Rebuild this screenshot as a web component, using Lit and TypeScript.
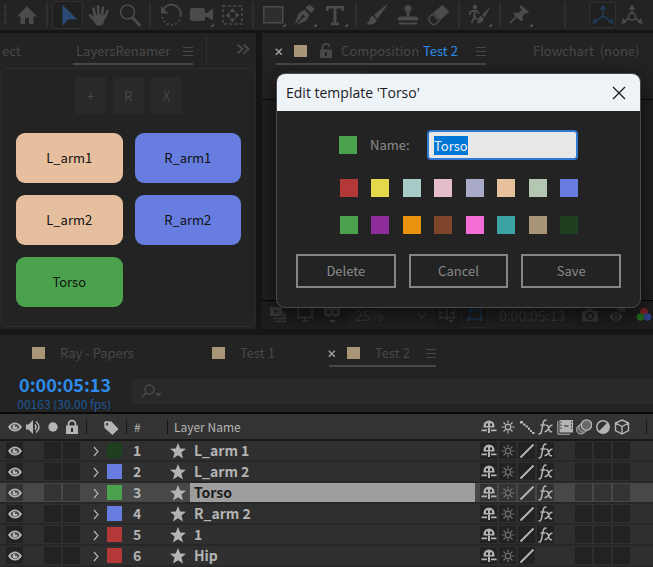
import { LitElement, html, css, svg, nothing, TemplateResult } from "lit";
import { customElement, property, query, state } from "lit/decorators.js";
import { classMap } from "lit/directives/class-map.js";
import { styleMap } from "lit/directives/style-map.js";

type Icon = TemplateResult<2>;

const corner = svg`<path d="M24 20v4h-4z" fill="currentColor"/>`;

/* Toolbar glyphs, drawn on a 24 x 24 grid. */
const tools: Record<string, Icon> = {
  home: svg`<path fill="currentColor" d="M12 3 2 13.500h3.500V21h4.500v-6h4v6h4.500v-7.500H22z"/>`,
  select: svg`<path fill="#2b4a72" d="M6.500 2v21l5.500-6.500h9.500z"/>`,
  hand: svg`<g fill="none" stroke="currentColor" stroke-linecap="round" stroke-width="2.600"><path d="M8 13 6.500 5.500M11.500 12 11 3.500M15 12l1-7.500M18 14l2.500-6M7.500 17 3 12.500"/></g><path fill="currentColor" d="M6.500 11.500h13L17 19l-2 3.500H9.500L5 16z"/>`,
  zoom: svg`<circle cx="9.500" cy="9" r="7" fill="none" stroke="currentColor" stroke-width="1.500"/><path d="m15 15 6.500 7" stroke="currentColor" stroke-width="3" stroke-linecap="round"/>`,
  rotate: svg`<path d="M3.500 8a9 9 0 0 1 17.800 6" fill="none" stroke="currentColor" stroke-width="1.800"/><path fill="currentColor" d="M2 3v7.500h7.500z"/><path d="M20.500 17A9 9 0 0 1 3.500 14" fill="none" stroke="currentColor" stroke-width="1.800" stroke-dasharray="1.800 2.400"/>`,
  camera: svg`<rect x="0" y="5" width="15" height="13" rx="2" fill="currentColor"/><path fill="currentColor" d="M14 10h3l5-4h1v11h-1l-5-3h-3z"/>${corner}`,
  pan: svg`<rect x="2" y="3" width="19" height="18" fill="none" stroke="currentColor" stroke-width="1.600" stroke-dasharray="3 2.200"/><path fill="currentColor" d="m11.500 5 3 4h-6zM11.500 19.500l3-4h-6zM4.500 12.200l4-3v6zM18.500 12.200l-4-3v6z"/>`,
  rect: svg`<rect x="1.800" y="3.800" width="19" height="16" fill="#2e2e2e" stroke="currentColor" stroke-width="1.500"/>${corner}`,
  pen: svg`<path fill="currentColor" d="m14 3 3-1.500 4.500 4.500L20 8.500l-2 1.500L12.500 5zM11 6.500l5.500 5-3 6L3 22l-1-.5L5 11z"/><path d="m3 21.500 6-7" stroke="#232323" stroke-width="1.200"/><circle cx="10" cy="13.500" r="1.500" fill="#232323"/>${corner}`,
  type: svg`<path fill="currentColor" d="M2 3h18v5h-2.500V5.500h-5v14H15V22H7v-2.500h2.500v-14h-5V8H2z"/>${corner}`,
  brush: svg`<path fill="currentColor" d="M21.500 1.500 9 12l3.500 4L22 2.500zM8 13c-4 .5-2.500 5-6.500 8 5 1.500 10 0 10-4.500z"/>`,
  stamp: svg`<path fill="currentColor" d="M12 2a3.600 3.600 0 0 0-2 6.500c1 1 .8 3 .5 5H4q-2 0-2 2.500v1.500h20V16q0-2.500-2-2.500h-6.500c-.3-2-.5-4 .5-5A3.600 3.600 0 0 0 12 2zM3 19.500h18v2H3z"/>`,
  eraser: svg`<path fill="currentColor" d="m15 2 7.500 6.500-9 8.500-7.500-7z"/><path d="m5.500 11 7 6.500-4.500 4H5.500L2 18v-3.500z" fill="none" stroke="currentColor" stroke-width="1.300"/>`,
  roto: svg`<circle cx="7" cy="4" r="2.200" fill="currentColor"/><path d="M2 12V9l4-1.500 3 .5 2 3M6.500 8v6L3.500 20M7 14l2.500 3" fill="none" stroke="currentColor" stroke-width="1.800"/><path fill="currentColor" d="m23 3-9 9 2.500 2.500zM13 13c-3 .5-2 4-4.500 7 4 .8 7-1 7-4.500z"/>${corner}`,
  pin: svg`<path fill="currentColor" d="m12 2 8 7-1.500 1.500-2-.2-3 3.200.5 3.500-1.800 1.500-8-7.500L6 9.500l3.800.2L12.500 7l-1.700-3z"/><path d="m7.500 13.500-6.500 6.500" stroke="currentColor" stroke-width="1.800"/>${corner}`,
};

const axis = (hub: boolean): Icon => svg`
  <g fill="none" stroke="currentColor" stroke-width="1.600">
    <path d=${hub ? "M12 10V5M8.500 15.500 4.500 18M15.500 15.500l4 2.500" : "M12 13V5M12 13l-8 5.500M12 13l8 5.500"} />
    ${hub ? svg`<circle cx="12" cy="13.500" r="3.600"/>` : nothing}
  </g>
  <path fill="currentColor" d="m12 1.500 3.500 5h-7zM1.500 21l1.200-6 4 4.800zM22.500 21l-1.200-6-4 4.800z"/>`;

/* Small glyphs, drawn on a 16 x 16 grid. */
const small: Record<string, Icon> = {
  eye: svg`<path fill="currentColor" fill-rule="evenodd" d="M1 8q3-4.500 7-4.500T15 8q-3 4.500-7 4.500T1 8zm3 0q0 2 4 3 4-1 4-3t-4-3Q4 6 4 8z"/><circle cx="8" cy="8" r="2.600" fill="currentColor"/><circle cx="9" cy="7" r=".9" fill="#222"/>`,
  speaker: svg`<path fill="currentColor" d="M0 5.500h2.500L7 1v14l-4.500-4.500H0z"/><path d="M9 5.500q2 2.500 0 5M10 2.500q6 5.500 0 11" fill="none" stroke="currentColor" stroke-width="1.500"/>`,
  solo: svg`<circle cx="8" cy="8" r="4.700" fill="currentColor"/>`,
  lock: svg`<path d="M4.500 8V5.200a3.500 3.500 0 0 1 7 0V8" fill="none" stroke="currentColor" stroke-width="1.800"/><rect x="2" y="6.500" width="12" height="8.500" fill="currentColor"/><path d="M8 9v4" stroke="#2b2b2b" stroke-width="2"/>`,
  unlock: svg`<path d="M4.500 8V4.500a3.500 3.500 0 0 1 7-.5" fill="none" stroke="currentColor" stroke-width="1.800"/><rect x="2" y="6.500" width="12" height="8.500" fill="currentColor"/><path d="M8 9v4" stroke="#232323" stroke-width="2"/>`,
  tag: svg`<path fill="currentColor" fill-rule="evenodd" d="M1 2.500 2.500 1l6 .5 7 7.500-6 6-8-7zM4 3a1.200 1.200 0 1 0 0 2.400A1.200 1.200 0 0 0 4 3z"/>`,
  star: svg`<path fill="currentColor" d="m8 0 2.200 5.600 5.800.2-4.600 3.700L13 15.500l-5-3.300-5 3.300 1.600-6L0 5.800l5.800-.2z"/>`,
  shy: svg`<path fill="currentColor" fill-rule="evenodd" d="M8 1.500A5.500 5.500 0 0 0 2.500 7v1.500h11V7A5.500 5.500 0 0 0 8 1.500zM5 4.500h2V7H5zM9 4.500h2V7H9z"/><path fill="currentColor" d="M7 8.500h2v5.500H7zM.5 10.500H6v1.700H.5zM10 10.500h5.500v1.700H10z"/>`,
  sun: svg`<circle cx="8" cy="8" r="2.700" fill="none" stroke="currentColor" stroke-width="1.300"/><path d="M8 1.500v3M8 11.500v3M1.500 8h3M11.500 8h3M3.500 3.500l2 2M10.500 10.500l2 2M12.500 3.500l-2 2M5.500 10.500l-2 2" stroke="currentColor" stroke-width="1.200"/>`,
  steps: svg`<path fill="currentColor" d="M1 2h3v2.500H1zM4 4.500h2.500v2H4zM6.500 6.500H9v2H6.500zM9 8.500h2V11H9zM11 11h2v2h-2zM13 13h2.500v2H13z"/>`,
  slash: svg`<path d="M1.500 14.500 14.500 1.500" stroke="currentColor" stroke-width="2"/>`,
  fx: svg`<path d="M8.500 1.500Q6 0 5.200 4L3.500 12q-.8 4-3 2.500M2.500 6h5M8 6.500q1.500-1 2.200 1.500l1.200 3.500q.8 2 2.600.8M14.500 6.500q-1.500-.8-3 1.500L9.500 11q-1.500 2-3 1.500" fill="none" stroke="currentColor" stroke-width="1.500"/>`,
  film: svg`<path d="M.8 2v13.200H13" fill="none" stroke="currentColor"/><path fill="currentColor" fill-rule="evenodd" d="M2.500 1H16v12.500H2.500zM3.500 2.500V4h1V2.500zm0 3V7h1V5.500zm0 3V10h1V8.500zM14 2.500V4h1V2.500zm0 3V7h1V5.500zm0 3V10h1V8.500z"/><path d="M7 7h4.500" stroke="#222"/>`,
  blur: svg`<g stroke="currentColor" fill="#555"><circle cx="5" cy="10.500" r="4.500"/><circle cx="7.500" cy="8.500" r="4.700"/><circle cx="10.500" cy="6" r="5.200" stroke-width="1.300" fill="#6a6a6a"/></g>`,
  adjust: svg`<circle cx="8" cy="8" r="6.200" fill="none" stroke="currentColor" stroke-width="1.500"/><path fill="currentColor" d="M12.400 3.600A6.200 6.200 0 0 1 3.600 12.400z"/>`,
  cube: svg`<path d="m8 1 6.500 3v7.500L8 15l-6.500-3.500V4zM1.500 4 8 7.500 14.500 4M8 7.500V15" fill="none" stroke="currentColor" stroke-width="1.400"/>`,
  chevron: svg`<path d="m6 4 4 4.500L6 13" fill="none" stroke="currentColor" stroke-width="1.200"/>`,
  down: svg`<path d="m3.500 6 4.500 4.500L12.500 6" fill="none" stroke="currentColor" stroke-width="1.300"/>`,
  more: svg`<path d="m2.500 3.500 5 4.500-5 4.500M8.500 3.500l5 4.500-5 4.500" fill="none" stroke="currentColor" stroke-width="2"/>`,
  menu: svg`<path d="M3 4.500h10M3 8.500h10M3 12.500h10" stroke="currentColor"/>`,
  close: svg`<path d="m2 2 12 12M14 2 2 14" stroke="currentColor" stroke-width="1.300"/>`,
  cross: svg`<path d="m4.800 5.800 6 6M10.800 5.800l-6 6" stroke="currentColor" stroke-width="1.600"/>`,
  frames: svg`<rect x="0" y="0" width="12" height="9" fill="currentColor"/><path d="m4.500 2 4 2.500-4 2.500z" fill="#1d1d1d"/><path d="M3 11.500h10.500V4M5.500 14.500H15.500V7" fill="none" stroke="currentColor" stroke-width="1.600"/>`,
  monitor: svg`<path d="M1 0v10.500h14V0M5 14h6M8 10.500V14" fill="none" stroke="currentColor" stroke-width="1.600"/>`,
  mask: svg`<path fill="currentColor" d="M0 1h16v5q-1 4-4.500 4Q9 10 8 7.500 7 10 4.500 10 1 10 0 6zM5 13h7l-3.500 3.500z"/><circle cx="4.500" cy="5" r="2" fill="#1d1d1d"/><circle cx="11.500" cy="5" r="2" fill="#1d1d1d"/>`,
  guides: svg`<path d="M1 2v9h14V2M8 0v13M0 6h5M11 6h5" fill="none" stroke="currentColor" stroke-width="1.300"/><path fill="currentColor" d="M9 13h6l-3 3z"/>`,
  path: svg`<path d="M2 12 4 3.500 13.500 2v10z" fill="none" stroke="currentColor" stroke-width="1.300"/><path fill="currentColor" d="M0 10.500h3.500V14H0zM12 10.500h3.500V14H12zM2 2h3.500v3H2zM12 0h3v3h-3z"/>`,
  snapshot: svg`<path fill="currentColor" fill-rule="evenodd" d="M0 4h4l1.500-2.500h5L12 4h4v10.500H0zm8 1a4 4 0 1 0 0 8 4 4 0 0 0 0-8z"/><circle cx="8" cy="9" r="2.300" fill="currentColor"/>`,
  show: svg`<path fill="currentColor" fill-rule="evenodd" d="M0 9.500Q3 5 7 5t7 4.500Q11 14 7 14T0 9.500zM7 6.500a3 3 0 1 0 0 6 3 3 0 0 0 0-6z"/><circle cx="7" cy="9.500" r="1.600" fill="currentColor"/><path fill="currentColor" d="M8 0h8v5h-2l-6-1.500z"/>`,
  rgb: svg`<circle cx="8" cy="5" r="4" fill="#7a2222"/><circle cx="4.500" cy="10" r="3.800" fill="#226a22"/><circle cx="11.500" cy="10" r="3.800" fill="#303f86"/>`,
};

@customElement("ui-icon")
class UiIcon extends LitElement {
  static styles = css`
    :host { display: inline-flex; flex: none; width: 16px; height: 16px; }
    :host([large]) { width: 24px; height: 24px; }
    svg { width: 100%; height: 100%; display: block; }
  `;
  @property() name = "";
  @property({ type: Boolean, reflect: true }) large = false;

  render() {
    const shape = this.name === "axis" ? axis(false)
      : this.name === "axis-hub" ? axis(true)
      : this.large ? tools[this.name] : small[this.name];
    const box = this.large ? "0 0 24 24" : "0 0 16 16";
    return html`<svg viewBox=${box} aria-hidden="true">${shape}</svg>`;
  }
}

const base = css`
  * { box-sizing: border-box; }
  button, input, select { font: inherit; color: inherit; background: none; border: 0; padding: 0; margin: 0; border-radius: 0; }
  button { display: inline-flex; align-items: center; justify-content: center; white-space: nowrap; }
`;

@customElement("tool-bar")
class ToolBar extends LitElement {
  static styles = [base, css`
    :host { display: flex; align-items: center; height: 30px; overflow: hidden; background: #232323; color: #4b4b4b; padding-left: 4px; }
    .grip { flex: none; width: 3px; height: 20px; background: repeating-linear-gradient(#3a3a3a 0 1px, #232323 1px 2px); }
    .home { flex: none; width: 31px; margin-left: 4px; }
    .group { display: flex; flex: none; }
    .tool { width: 31px; height: 28px; }
    .sep { flex: none; width: 2px; height: 26px; margin: 0 4px; background: #2e2e2e; }
    .wide { margin: 0 23px 0 28px; }
    .on { background: #202020; box-shadow: inset 0 0 0 1px #303030; border-radius: 3px; }
    .blue { color: #213a55; }
    .axis { width: 27px; height: 26px; margin-right: 2px; }
  `];
  private groups = [
    ["select", "hand", "zoom"],
    ["rotate", "camera", "pan"],
    ["rect", "pen", "type"],
    ["brush", "stamp", "eraser"],
    ["roto"],
    ["pin"],
  ];
  @state() private active = "select";

  render() {
    return html`
      <span class="grip"></span>
      <button class="home" aria-label="home"><ui-icon large name="home"></ui-icon></button>
      ${this.groups.map((g) => html`
        <span class="sep"></span>
        <div class="group">${g.map((t) => html`
          <button class=${classMap({ tool: true, on: t === this.active })} aria-label=${t}
            @click=${() => (this.active = t)}><ui-icon large name=${t}></ui-icon></button>`)}
        </div>`)}
      <span class="sep wide"></span>
      <button class="tool axis on blue" aria-label="local axis"><ui-icon large name="axis"></ui-icon></button>
      <button class="tool axis" aria-label="world axis"><ui-icon large name="axis-hub"></ui-icon></button>
    `;
  }
}

@customElement("renamer-panel")
class RenamerPanel extends LitElement {
  static styles = [base, css`
    :host { display: flex; flex-direction: column; background: #232323; color: #484848; padding: 0 1px 2px; }
    .tabs { display: flex; height: 35px; padding: 0 4px 3px 1px; overflow: hidden; }
    .tab { line-height: 32px; flex: none; }
    .first { width: 71px; justify-content: flex-start; padding-top: 4px; }
    .open { padding: 6px 0 0 3px; border-bottom: 2px solid #484848; justify-content: space-between; width: 120px; line-height: 24px; }
    .menu { margin-right: -3px; }
    .rule { width: 1px; background: #303030; margin: 3px auto 0 13px; }
    .body { flex: 1; border: 1px solid #2d2d2d; border-radius: 3px; padding: 8px 13px 19px 14px; }
    .actions { display: flex; justify-content: center; gap: 7px; margin-bottom: 19px; }
    .act { width: 31px; height: 37px; background: #292929; }
    .cards { display: grid; grid-template-columns: 1fr 1fr; gap: 12px; }
    .card { height: 50px; border-radius: 9px; color: #111; background: #e6bf9e; }
    .blue { background: #677de0; }
    .green { background: #4aa34c; }
  `];
  private cards = [
    ["L_arm1", ""], ["R_arm1", "blue"], ["L_arm2", ""], ["R_arm2", "blue"], ["Torso", "green"],
  ];
  render() {
    return html`
      <div class="tabs">
        <button class="tab first">ect</button>
        <button class="tab open">LayersRenamer<ui-icon class="menu" name="menu"></ui-icon></button>
        <span class="rule"></span>
        <button class="tab" aria-label="more panels"><ui-icon name="more"></ui-icon></button>
      </div>
      <div class="body">
        <div class="actions">${["+", "R", "X"].map((a) => html`<button class="act">${a}</button>`)}</div>
        <div class="cards">${this.cards.map(([n, c]) => html`<button class="card ${c}">${n}</button>`)}</div>
      </div>`;
  }
}

@customElement("template-dialog")
class TemplateDialog extends LitElement {
  static styles = [base, css`
    :host { display: block; border: 1px solid #4a4a4a; border-radius: 9px; overflow: hidden; background: #232323; color: #8a8a8a; box-shadow: 0 6px 22px #000a; }
    .head { display: flex; align-items: center; justify-content: space-between; height: 37px; padding: 0 13px 0 9px; background: #eef3f8; color: #1b1b1b; font: 14px/20px "Open Sans", "Noto Sans", sans-serif; }
    .title { font: inherit; margin: 0; }
    .form { padding: 19px; }
    .name { display: flex; align-items: center; height: 30px; margin: 0 43px 19px; }
    .chip { width: 18px; height: 18px; flex: none; }
    .label { margin-left: 13px; width: 57px; white-space: nowrap; }
    .text { flex: 1; min-width: 0; height: 30px; padding: 0 5px; background: #e8e8e8; color: #222; border: 2px solid #2f79d0; border-radius: 4px; outline: none; }
    .text::selection { background: #0078d7; color: #f4f4f4; }
    .swatches { display: grid; grid-template-columns: repeat(8, 18px); justify-content: space-between; row-gap: 19px; margin: 0 43px 20px 44px; }
    .actions { display: grid; grid-template-columns: repeat(3, 1fr); gap: 13px; }
    .btn { height: 34px; border: 2px solid #858585; }
  `];
  @state() private color = "#4aa34c";
  @query(".text") private text!: HTMLInputElement;
  private colors = [
    "#b53838", "#e4d84c", "#a9cbc7", "#e5bcc9", "#a9a9ca", "#e7c19e", "#b3c7b3", "#677de0",
    "#4aa34c", "#8e2c9a", "#e8920d", "#7f452a", "#f46cd6", "#3da2a5", "#a89677", "#1e401e",
  ];
  firstUpdated() {
    this.text.focus();
    this.text.select();
  }
  render() {
    return html`
      <div class="head">
        <h2 class="title">Edit template 'Torso'</h2>
        <button aria-label="Close"><ui-icon name="close"></ui-icon></button>
      </div>
      <div class="form">
        <div class="name">
          <span class="chip" style=${styleMap({ background: this.color })}></span>
          <label class="label" for="name">Name:</label>
          <input class="text" id="name" value="Torso" />
        </div>
        <div class="swatches">${this.colors.map((c) => html`
          <button class="chip" aria-label=${c} style=${styleMap({ background: c })}
            @click=${() => (this.color = c)}></button>`)}
        </div>
        <div class="actions">${["Delete", "Cancel", "Save"].map((b) => html`<button class="btn">${b}</button>`)}</div>
      </div>`;
  }
}

@customElement("composition-panel")
class CompositionPanel extends LitElement {
  static styles = [base, css`
    :host { display: flex; flex-direction: column; position: relative; background: #232323; color: #484848; min-width: 0; }
    .tabs { display: flex; height: 32px; padding-left: 14px; overflow: hidden; }
    .tab { line-height: 24px; }
    .open { padding-top: 6px; border-bottom: 2px solid #484848; width: 210px; justify-content: flex-start; flex: none; }
    .cross { color: #9a9a9a; margin-left: -5px; }
    .swatch { width: 13px; height: 12px; margin: 0 11px 0 7px; background: #a89677; }
    .caption { margin: 0 auto 0 7px; }
    .name { color: #2d8ceb; margin-left: 1px; }
    .menu { margin-right: -3px; }
    .flow { margin-left: 47px; padding-top: 4px; line-height: 28px; white-space: pre; font-size: 13px; }
    .crumbs { height: 35px; border-bottom: 1px solid #0c0c0c; padding: 6px 0 0 24px; }
    .crumb { width: 80px; height: 26px; background: #2a2a2a; }
    .view { flex: 1; border-bottom: 1px solid #000; background: #202020; }
    .foot { display: flex; align-items: center; height: 28px; padding-left: 8px; gap: 11px; overflow: hidden; color: #3a3a3a; background: #1e1e1e; font-size: 14px; }
    .scale { position: relative; display: flex; align-items: center; width: 87px; flex: none; background: #212121; margin-left: -4px; }
    .select { appearance: none; width: 100%; height: 24px; padding-left: 8px; }
    .arrow { position: absolute; right: 4px; pointer-events: none; }
    .guides { margin-left: -6px; }
    .path { width: 27px; height: 26px; flex: none; margin: 0 -5px; color: #1b3450; box-shadow: inset 0 0 0 1px #272727; border-radius: 3px; }
    .time { flex: none; width: 86px; height: 24px; background: #212121; margin: 0 -4px 0 -5px; }
    .dialog { position: absolute; top: 40px; left: 14px; right: 12px; }
  `];
  render() {
    return html`
      <div class="tabs">
        <button class="tab open">
          <ui-icon class="cross" name="cross"></ui-icon><span class="swatch"></span><ui-icon name="unlock"></ui-icon>
          <span class="caption">Composition <span class="name">Test 2</span></span>
          <ui-icon class="menu" name="menu"></ui-icon>
        </button>
        <button class="tab flow">Flowchart  (none)</button>
      </div>
      <div class="crumbs"><div class="crumb"></div></div>
      <div class="view"></div>
      <div class="foot">
        <ui-icon name="frames"></ui-icon><ui-icon name="monitor"></ui-icon><ui-icon name="mask"></ui-icon>
        <span class="scale">
          <select class="select" aria-label="Magnification"><option>25%</option></select>
          <ui-icon class="arrow" name="down"></ui-icon>
        </span>
        <ui-icon class="guides" name="guides"></ui-icon>
        <button class="path" aria-label="Mask paths"><ui-icon name="path"></ui-icon></button>
        <button class="time">0:00:05:13</button>
        <ui-icon name="snapshot"></ui-icon><ui-icon name="show"></ui-icon><ui-icon name="rgb"></ui-icon>
      </div>
      <template-dialog class="dialog" role="dialog" aria-label="Edit template"></template-dialog>`;
  }
}

interface Layer { name: string; color: string; fx: boolean; }

@customElement("timeline-panel")
class TimelinePanel extends LitElement {
  static styles = [base, css`
    :host { display: block; background: #232323; color: #484848; }
    .tabs { display: flex; height: 32px; overflow: hidden; }
    .tab { line-height: 28px; padding-top: 4px; justify-content: flex-start; }
    .swatch { width: 13px; height: 12px; margin-right: 15px; background: #a89677; }
    .one { width: 180px; margin-left: 32px; }
    .two { width: 117px; }
    .open { width: 107px; padding-top: 6px; line-height: 24px; border-bottom: 2px solid #484848; }
    .cross { color: #9a9a9a; margin: 0 7px 0 -5px; }
    .menu { margin: 0 -3px 0 auto; }
    .bar { display: flex; align-items: center; height: 45px; }
    .clock { width: 111px; margin-right: 21px; padding-top: 4px; flex: none; display: flex; flex-direction: column; align-items: flex-end; }
    .now { color: #2d8ceb; font-size: 18px; font-weight: 700; line-height: 24px; }
    .frames { color: #1d5796; font-size: 12px; line-height: 16px; white-space: nowrap; }
    .search { flex: 1; display: flex; align-items: center; height: 25px; margin-top: 4px; padding-left: 9px; background: #292929; border-radius: 3px 0 0 3px; }
    .glass { width: 21px; height: 15px; flex: none; }
    .query { flex: 1; min-width: 0; height: 25px; padding-left: 6px; outline: none; }
    .layers { width: 100%; table-layout: fixed; border-spacing: 0; border-top: 2px solid #0a0a0a; color: #b4b4b4; }
    th, td { padding: 0; text-align: left; vertical-align: middle; overflow: hidden; white-space: nowrap; line-height: 19px; }
    th { height: 27px; background: #333; font-weight: 400; font-size: 12px; border-bottom: 2px solid #181818; }
    td { height: 21px; background: #2f2f2f; border-bottom: 2px solid #272727; font-weight: 700; font-size: 14px; }
    .picked td { background: #484848; }
    .av { width: 86px; }
    .label { width: 40px; }
    .num { width: 41px; }
    .switches { width: 171px; }
    .end { width: 7px; }
    .cells { display: flex; align-items: center; gap: 2px; padding-left: 6px; }
    .keys { padding-left: 5px; }
    .box { display: flex; align-items: center; justify-content: center; width: 17px; height: 17px; flex: none; line-height: 0; }
    td .fill { background: #222; }
    .picked .fill { background: #333; }
    .quality { color: #6e6e6e; }
    .tint { display: flex; align-items: center; gap: 3px; padding-left: 2px; }
    .chip { width: 15px; height: 15px; }
    th .tint { padding-left: 16px; }
    .count { padding-left: 7px; }
    th .edge { display: block; border-left: 1px solid #161616; height: 14px; line-height: 14px; }
    .title { display: flex; align-items: center; padding-left: 3px; }
    .word { flex: 1; padding-left: 4px; margin-left: 4px; }
    .picked .word { background: #9e9e9e; color: #1c1c1c; }
    th .label-text { padding-left: 6px; }
  `];
  private layers: Layer[] = [
    { name: "L_arm 1", color: "#1e401e", fx: true },
    { name: "L_arm 2", color: "#677de0", fx: true },
    { name: "Torso", color: "#4aa34c", fx: true },
    { name: "R_arm 2", color: "#677de0", fx: true },
    { name: "1", color: "#b53838", fx: true },
    { name: "Hip", color: "#b53838", fx: false },
  ];
  @state() private picked = 2;

  private box(name = "", extra = "") {
    return html`<span class="box ${extra}">${name ? html`<ui-icon name=${name}></ui-icon>` : nothing}</span>`;
  }

  render() {
    return html`
      <div class="tabs">
        <button class="tab one"><span class="swatch"></span>Ray - Papers</button>
        <button class="tab two"><span class="swatch"></span>Test 1</button>
        <button class="tab open">
          <ui-icon class="cross" name="cross"></ui-icon><span class="swatch"></span>Test 2
          <ui-icon class="menu" name="menu"></ui-icon>
        </button>
      </div>
      <div class="bar">
        <div class="clock"><button class="now">0:00:05:13</button><div class="frames">00163 (30.00 fps)</div></div>
        <label class="search">
          <svg class="glass" viewBox="0 0 21 15" aria-hidden="true">
            <circle cx="8.500" cy="5.500" r="4.500" fill="none" stroke="currentColor" stroke-width="1.500"/>
            <path d="M5.500 8.500.8 13.500" stroke="currentColor" stroke-width="1.500"/><path d="M14 9h7l-3.500 3.500z" fill="currentColor"/>
          </svg>
          <input class="query" aria-label="Search layers" />
        </label>
      </div>
      <table class="layers">
        <thead>
          <tr>
            <th class="av"><div class="cells">${["eye", "speaker", "solo", "lock"].map((n) => this.box(n))}</div></th>
            <th class="label"><div class="edge tint"><ui-icon name="tag"></ui-icon></div></th>
            <th class="num"><span class="edge count">#</span></th>
            <th><span class="edge label-text">Layer Name</span></th>
            <th class="switches"><div class="cells keys">
              ${["shy", "sun", "steps", "fx", "film", "blur", "adjust", "cube"].map((n) => this.box(n))}
            </div></th>
            <th class="end"><span class="edge"></span></th>
          </tr>
        </thead>
        <tbody>
          ${this.layers.map((l, i) => html`
            <tr class=${classMap({ picked: i === this.picked })} @click=${() => (this.picked = i)}>
              <td><div class="cells">${this.box("eye", "fill")}${this.box()}${this.box("", "fill")}${this.box("", "fill")}</div></td>
              <td><div class="tint"><ui-icon name="chevron"></ui-icon><span class="chip" style=${styleMap({ background: l.color })}></span></div></td>
              <td><span class="count">${i + 1}</span></td>
              <td><div class="title"><ui-icon name="star"></ui-icon><span class="word">${l.name}</span></div></td>
              <td><div class="cells keys">
                ${this.box("shy", "fill")}${this.box("sun", "fill quality")}${this.box("slash", "fill")}
                ${l.fx ? this.box("fx", "fill") : this.box()}${this.box()}
                ${this.box("", "fill")}${this.box("", "fill")}${this.box("", "fill")}
              </div></td>
              <td></td>
            </tr>`)}
        </tbody>
      </table>`;
  }
}

@customElement("app-root")
class AppRoot extends LitElement {
  static styles = css`
    :host { display: flex; flex-direction: column; min-height: 100vh; overflow: hidden; background: #161616; font: 13px/20px "Noto Sans CJK SC", "Noto Sans", sans-serif; }
    .work { display: grid; grid-template-columns: 256px minmax(0, 1fr); column-gap: 6px; margin: 3px 0 6px; }
    .grow { flex: 1; }
  `;
  render() {
    return html`
      <tool-bar></tool-bar>
      <div class="work">
        <renamer-panel></renamer-panel>
        <composition-panel></composition-panel>
      </div>
      <timeline-panel class="grow"></timeline-panel>`;
  }
}
